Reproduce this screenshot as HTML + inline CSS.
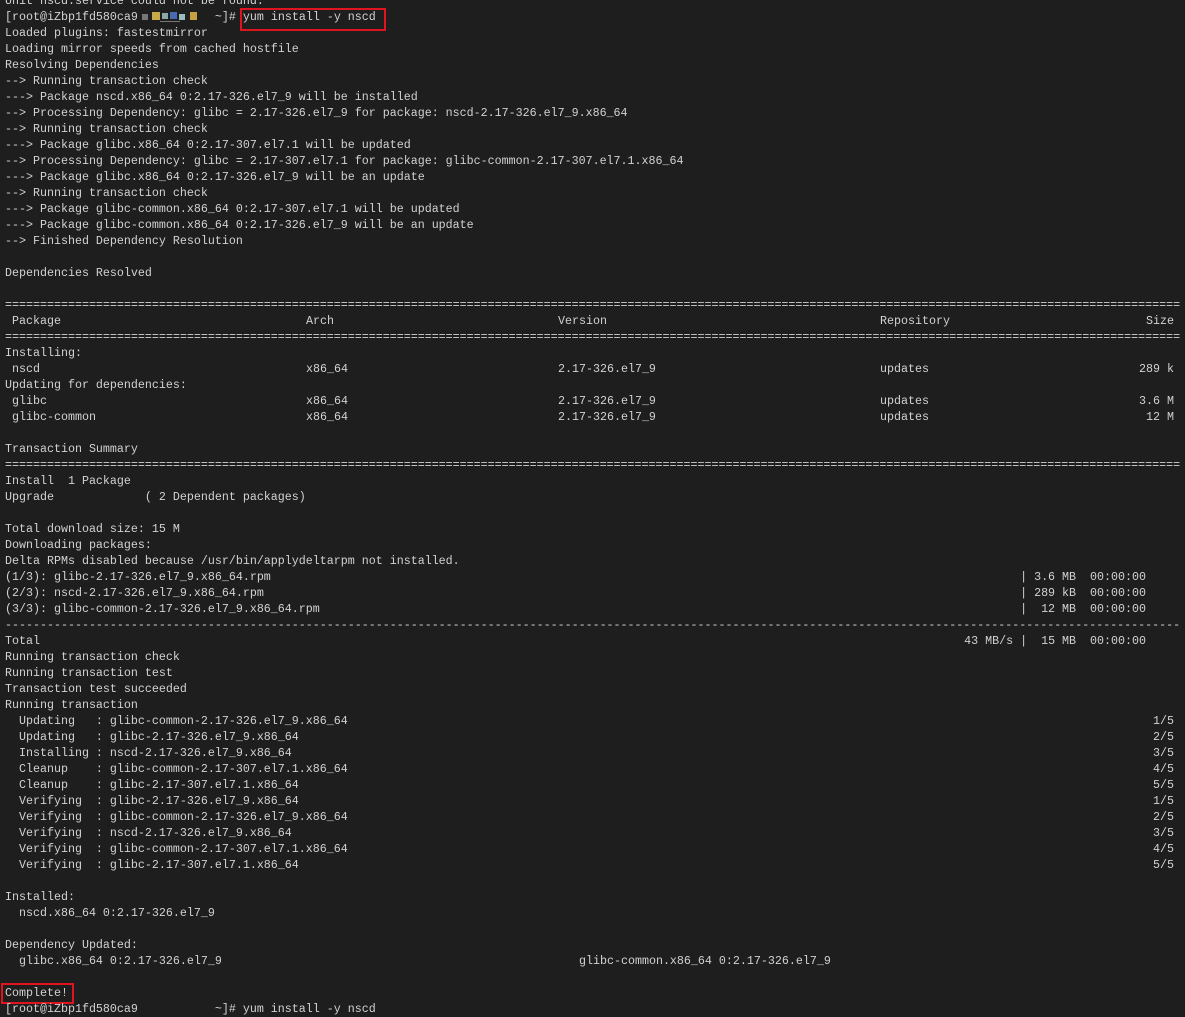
<!DOCTYPE html>
<html><head><meta charset="utf-8"><style>
html,body{margin:0;padding:0;}
body{width:1185px;height:1006px;background:#1e1e1e;overflow:hidden;position:relative;
font-family:"Liberation Mono",monospace;font-size:11.67px;color:#d2d2d2;}
.l{position:absolute;left:5px;height:16px;line-height:16px;white-space:pre;}
.s{position:absolute;top:0;white-space:pre;}
.r{position:absolute;top:0;white-space:pre;text-align:right;}
.box{position:absolute;border:2px solid #e0141e;box-sizing:border-box;}
.blk{display:inline-block;width:5px;height:6px;vertical-align:middle;}
</style></head><body>
<div class="l" style="top:-7px">Unit nscd.service could not be found.</div>
<div class="l" style="top:9px">[root@iZbp1fd580ca9<span style="display:inline-block;width:70px;height:12px;vertical-align:middle;position:relative"><span style="position:absolute;left:4px;top:3px;width:6px;height:6px;background:#777"></span><span style="position:absolute;left:14px;top:1px;width:8px;height:8px;background:#c9a84a"></span><span style="position:absolute;left:24px;top:2px;width:6px;height:6px;background:#8aa"></span><span style="position:absolute;left:32px;top:1px;width:7px;height:7px;background:#4a6ab0"></span><span style="position:absolute;left:41px;top:3px;width:6px;height:6px;background:#9bb"></span><span style="position:absolute;left:52px;top:1px;width:7px;height:8px;background:#c9a040"></span><span style="position:absolute;left:22px;top:10px;width:20px;height:1px;background:#777"></span></span> ~]# yum install -y nscd</div>
<div class="box" style="left:240px;top:8px;width:146px;height:23px"></div>
<div class="l" style="top:25px">Loaded plugins: fastestmirror</div>
<div class="l" style="top:41px">Loading mirror speeds from cached hostfile</div>
<div class="l" style="top:57px">Resolving Dependencies</div>
<div class="l" style="top:73px">--> Running transaction check</div>
<div class="l" style="top:89px">---> Package nscd.x86_64 0:2.17-326.el7_9 will be installed</div>
<div class="l" style="top:105px">--> Processing Dependency: glibc = 2.17-326.el7_9 for package: nscd-2.17-326.el7_9.x86_64</div>
<div class="l" style="top:121px">--> Running transaction check</div>
<div class="l" style="top:137px">---> Package glibc.x86_64 0:2.17-307.el7.1 will be updated</div>
<div class="l" style="top:153px">--> Processing Dependency: glibc = 2.17-307.el7.1 for package: glibc-common-2.17-307.el7.1.x86_64</div>
<div class="l" style="top:169px">---> Package glibc.x86_64 0:2.17-326.el7_9 will be an update</div>
<div class="l" style="top:185px">--> Running transaction check</div>
<div class="l" style="top:201px">---> Package glibc-common.x86_64 0:2.17-307.el7.1 will be updated</div>
<div class="l" style="top:217px">---> Package glibc-common.x86_64 0:2.17-326.el7_9 will be an update</div>
<div class="l" style="top:233px">--> Finished Dependency Resolution</div>
<div class="l" style="top:265px">Dependencies Resolved</div>
<div class="l" style="top:297px">========================================================================================================================================================================</div>
<div class="l" style="top:313px;width:1169px"><span class="s" style="left:0"> Package</span><span class="s" style="left:301px">Arch</span><span class="s" style="left:553px">Version</span><span class="s" style="left:875px">Repository</span><span class="r" style="right:0">Size</span></div>
<div class="l" style="top:329px">========================================================================================================================================================================</div>
<div class="l" style="top:345px">Installing:</div>
<div class="l" style="top:361px;width:1169px"><span class="s" style="left:0"> nscd</span><span class="s" style="left:301px">x86_64</span><span class="s" style="left:553px">2.17-326.el7_9</span><span class="s" style="left:875px">updates</span><span class="r" style="right:0">289 k</span></div>
<div class="l" style="top:377px">Updating for dependencies:</div>
<div class="l" style="top:393px;width:1169px"><span class="s" style="left:0"> glibc</span><span class="s" style="left:301px">x86_64</span><span class="s" style="left:553px">2.17-326.el7_9</span><span class="s" style="left:875px">updates</span><span class="r" style="right:0">3.6 M</span></div>
<div class="l" style="top:409px;width:1169px"><span class="s" style="left:0"> glibc-common</span><span class="s" style="left:301px">x86_64</span><span class="s" style="left:553px">2.17-326.el7_9</span><span class="s" style="left:875px">updates</span><span class="r" style="right:0">12 M</span></div>
<div class="l" style="top:441px">Transaction Summary</div>
<div class="l" style="top:457px">========================================================================================================================================================================</div>
<div class="l" style="top:473px">Install  1 Package</div>
<div class="l" style="top:489px">Upgrade             ( 2 Dependent packages)</div>
<div class="l" style="top:521px">Total download size: 15 M</div>
<div class="l" style="top:537px">Downloading packages:</div>
<div class="l" style="top:553px">Delta RPMs disabled because /usr/bin/applydeltarpm not installed.</div>
<div class="l" style="top:569px;width:1141px"><span class="s" style="left:0">(1/3): glibc-2.17-326.el7_9.x86_64.rpm</span><span class="r" style="right:0">| 3.6 MB  00:00:00</span></div>
<div class="l" style="top:585px;width:1141px"><span class="s" style="left:0">(2/3): nscd-2.17-326.el7_9.x86_64.rpm</span><span class="r" style="right:0">| 289 kB  00:00:00</span></div>
<div class="l" style="top:601px;width:1141px"><span class="s" style="left:0">(3/3): glibc-common-2.17-326.el7_9.x86_64.rpm</span><span class="r" style="right:0">|  12 MB  00:00:00</span></div>
<div class="l" style="top:617px">------------------------------------------------------------------------------------------------------------------------------------------------------------------------</div>
<div class="l" style="top:633px;width:1141px"><span class="s" style="left:0">Total</span><span class="r" style="right:0">43 MB/s |  15 MB  00:00:00</span></div>
<div class="l" style="top:649px">Running transaction check</div>
<div class="l" style="top:665px">Running transaction test</div>
<div class="l" style="top:681px">Transaction test succeeded</div>
<div class="l" style="top:697px">Running transaction</div>
<div class="l" style="top:713px;width:1169px"><span class="s" style="left:0">  Updating   : glibc-common-2.17-326.el7_9.x86_64</span><span class="r" style="right:0">1/5</span></div>
<div class="l" style="top:729px;width:1169px"><span class="s" style="left:0">  Updating   : glibc-2.17-326.el7_9.x86_64</span><span class="r" style="right:0">2/5</span></div>
<div class="l" style="top:745px;width:1169px"><span class="s" style="left:0">  Installing : nscd-2.17-326.el7_9.x86_64</span><span class="r" style="right:0">3/5</span></div>
<div class="l" style="top:761px;width:1169px"><span class="s" style="left:0">  Cleanup    : glibc-common-2.17-307.el7.1.x86_64</span><span class="r" style="right:0">4/5</span></div>
<div class="l" style="top:777px;width:1169px"><span class="s" style="left:0">  Cleanup    : glibc-2.17-307.el7.1.x86_64</span><span class="r" style="right:0">5/5</span></div>
<div class="l" style="top:793px;width:1169px"><span class="s" style="left:0">  Verifying  : glibc-2.17-326.el7_9.x86_64</span><span class="r" style="right:0">1/5</span></div>
<div class="l" style="top:809px;width:1169px"><span class="s" style="left:0">  Verifying  : glibc-common-2.17-326.el7_9.x86_64</span><span class="r" style="right:0">2/5</span></div>
<div class="l" style="top:825px;width:1169px"><span class="s" style="left:0">  Verifying  : nscd-2.17-326.el7_9.x86_64</span><span class="r" style="right:0">3/5</span></div>
<div class="l" style="top:841px;width:1169px"><span class="s" style="left:0">  Verifying  : glibc-common-2.17-307.el7.1.x86_64</span><span class="r" style="right:0">4/5</span></div>
<div class="l" style="top:857px;width:1169px"><span class="s" style="left:0">  Verifying  : glibc-2.17-307.el7.1.x86_64</span><span class="r" style="right:0">5/5</span></div>
<div class="l" style="top:889px">Installed:</div>
<div class="l" style="top:905px">  nscd.x86_64 0:2.17-326.el7_9</div>
<div class="l" style="top:937px">Dependency Updated:</div>
<div class="l" style="top:953px;width:1169px"><span class="s" style="left:0">  glibc.x86_64 0:2.17-326.el7_9</span><span class="s" style="left:574px">glibc-common.x86_64 0:2.17-326.el7_9</span></div>
<div class="l" style="top:985px">Complete!</div>
<div class="box" style="left:1px;top:983px;width:73px;height:21px"></div>
<div class="l" style="top:1001px">[root@iZbp1fd580ca9           ~]# yum install -y nscd</div>
</body></html>
